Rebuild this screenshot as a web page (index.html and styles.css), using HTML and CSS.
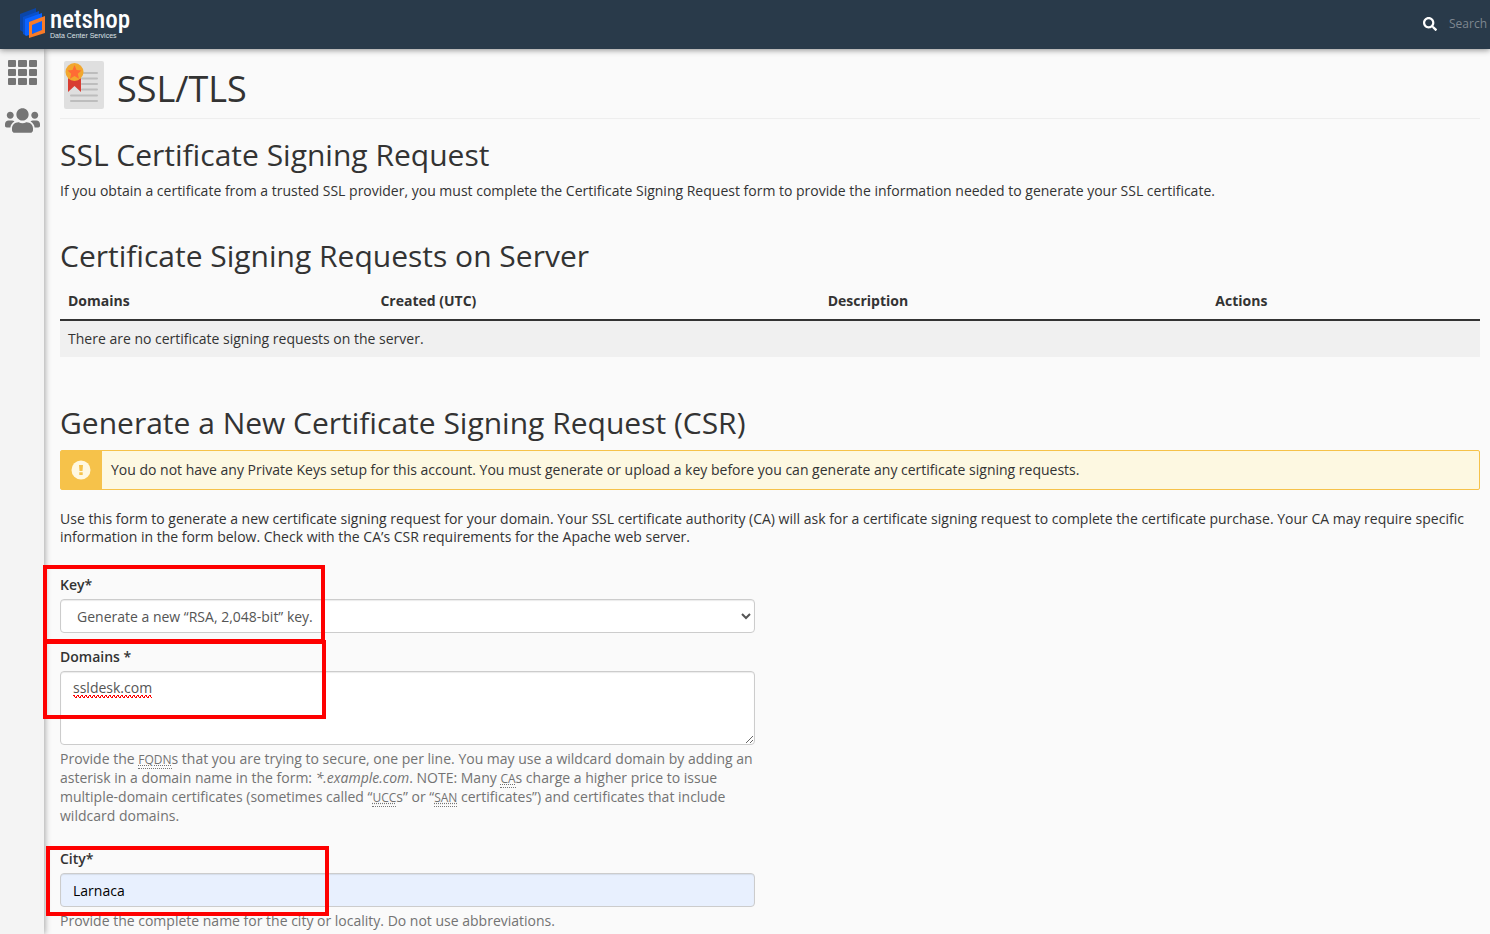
FILE: index.html
```html
<!DOCTYPE html>
<html lang="en">
<head>
<meta charset="utf-8">
<title>SSL/TLS</title>
<link rel="stylesheet" href="styles.css">
</head>
<body>
<header class="topbar">
  <a class="brand" href="#" aria-label="netshop Data Center Services">
    <svg class="brand-mark" viewBox="0 0 28 31" aria-hidden="true">
      <path fill="#0b46a8" d="M1 6 17 0v17L4 24l-3-2z"/>
      <path fill="#0a50cc" d="M4 9 20 3v17L6 27l-2-1z"/>
      <path fill="#0a62ff" d="M6 11 23 5v18L7 28l-1-1z"/>
      <path fill="#f97b28" fill-rule="evenodd" d="M10 14 26 8v17L10 30zM13 17v9l10-4v-9z"/>
    </svg>
    <span class="brand-text">
      <span class="brand-name">netshop</span>
      <span class="brand-tag">Data Center Services</span>
    </span>
  </a>
  <label class="search">
    <svg class="search-icon" viewBox="0 0 512 512" role="img" aria-label="Search"><path fill="#fff" d="M505 442.7 405.300 343c-4.500-4.500-10.600-7-17-7H372c27.600-35.300 44-79.700 44-128C416 93.100 322.900 0 208 0S0 93.100 0 208s93.100 208 208 208c48.300 0 92.700-16.400 128-44v16.300c0 6.400 2.500 12.500 7 17l99.700 99.700c9.400 9.400 24.600 9.400 33.900 0l28.300-28.300c9.400-9.400 9.400-24.600.1-34zM208 336c-70.700 0-128-57.200-128-128 0-70.700 57.200-128 128-128 70.700 0 128 57.200 128 128 0 70.700-57.200 128-128 128z"/></svg>
    <input class="search-input" type="text" placeholder="Search">
  </label>
</header>
<div class="shell">
  <nav class="sidebar" aria-label="Main">
    <a class="side-link" href="#" aria-label="Tools">
      <svg width="29" height="26" viewBox="0 0 29 26" fill="#757575">
        <rect width="8" height="7" rx="1"/><rect x="10" width="9" height="7" rx="1"/><rect x="21" width="8" height="7" rx="1"/>
        <rect y="9" width="8" height="7" rx="1"/><rect x="10" y="9" width="9" height="7" rx="1"/><rect x="21" y="9" width="8" height="7" rx="1"/>
        <rect y="18" width="8" height="7" rx="1"/><rect x="10" y="18" width="9" height="7" rx="1"/><rect x="21" y="18" width="8" height="7" rx="1"/>
      </svg>
    </a>
    <a class="side-link" href="#" aria-label="User Manager">
      <svg width="35" height="25" viewBox="0 32 640 448" fill="#757575"><path d="M96 224c35.300 0 64-28.700 64-64s-28.700-64-64-64-64 28.700-64 64 28.700 64 64 64zm448 0c35.300 0 64-28.700 64-64s-28.700-64-64-64-64 28.700-64 64 28.700 64 64 64zm32 32h-64c-17.600 0-33.500 7.100-45.100 18.600 40.300 22.100 68.900 62 75.100 109.400h66c17.700 0 32-14.300 32-32v-32c0-35.300-28.700-64-64-64zm-256 0c61.900 0 112-50.100 112-112S381.900 32 320 32 208 82.100 208 144s50.100 112 112 112zm76.800 32h-8.300c-20.800 10-43.900 16-68.500 16s-47.600-6-68.500-16h-8.300C179.600 288 128 339.600 128 403.200V432c0 26.500 21.500 48 48 48h288c26.500 0 48-21.500 48-48v-28.800c0-63.600-51.600-115.200-115.200-115.200zm-223.700-13.400C161.500 263.100 145.600 256 128 256H64c-35.300 0-64 28.700-64 64v32c0 17.700 14.300 32 32 32h65.900c6.300-47.400 34.900-87.300 75.200-109.400z"/></svg>
    </a>
  </nav>
  <main class="content">
    <div class="page-head">
      <svg class="page-icon" width="40" height="48" viewBox="0 0 40 48" aria-hidden="true">
        <rect width="40" height="48" rx="2" fill="#dfdfdf"/>
        <path d="M18 12h15M18 17.500h15M18 23h15M18 28.500h15M7 34.500h26M7 40h26" stroke="#bdbdbd" stroke-width="2" stroke-linecap="round"/>
        <path fill="#d83c32" d="M4 16h13v15l-6.500-6L4 31z"/>
        <circle cx="10.500" cy="11" r="9" fill="#f2a72e"/>
        <path fill="#ff6b35" d="m10.500 4 2 5 5 .5-3.700 3.300 1.200 5-4.500-2.700-4.500 2.700 1.200-5-3.700-3.300 5-.5z"/>
      </svg>
      <h1 class="page-title">SSL/TLS</h1>
    </div>

    <section class="intro">
      <h2 class="heading">SSL Certificate Signing Request</h2>
      <p class="text">If you obtain a certificate from a trusted SSL provider, you must complete the Certificate Signing Request form to provide the information needed to generate your SSL certificate.</p>
    </section>

    <section class="requests">
      <h2 class="heading">Certificate Signing Requests on Server</h2>
      <table class="table">
        <thead>
          <tr><th class="col-domains">Domains</th><th class="col-created">Created (UTC)</th><th class="col-desc">Description</th><th>Actions</th></tr>
        </thead>
        <tbody>
          <tr><td colspan="4">There are no certificate signing requests on the server.</td></tr>
        </tbody>
      </table>
    </section>

    <section>
      <h2 class="heading">Generate a New Certificate Signing Request (CSR)</h2>
      <div class="alert" role="alert">
        <div class="alert-badge">
          <svg width="20" height="20" viewBox="0 0 20 20" aria-hidden="true"><circle cx="10" cy="10" r="9.500" fill="#fff8e1"/><path fill="#f6c24a" d="M8 5h4l-.5 6h-3zM8.300 12.300h3.400v2.700H8.300z"/></svg>
        </div>
        <div class="alert-text">You do not have any Private Keys setup for this account. You must generate or upload a key before you can generate any certificate signing requests.</div>
      </div>
      <p class="text">Use this form to generate a new certificate signing request for your domain. Your SSL certificate authority (CA) will ask for a certificate signing request to complete the certificate purchase. Your CA may require specific information in the form below. Check with the CA’s CSR requirements for the Apache web server.</p>

      <form class="form">
        <div class="group">
          <label class="label" for="key">Key*</label>
          <select class="control" id="key"><option>Generate a new “RSA, 2,048-bit” key.</option></select>
          <span class="mark mark-key"></span>
        </div>
        <div class="group">
          <label class="label" for="domains">Domains *</label>
          <textarea class="control control-area" id="domains" spellcheck="false">ssldesk.com</textarea>
          <span class="squiggle"></span>
          <p class="help">Provide the <abbr class="abbr" title="Fully Qualified Domain Name">FQDN</abbr>s that you are trying to secure, one per line. You may use a wildcard domain by adding an asterisk in a domain name in the form: <em>*.example.com</em>. NOTE: Many <abbr class="abbr" title="Certificate Authority">CA</abbr>s charge a higher price to issue multiple-domain certificates (sometimes called “<abbr class="abbr" title="Unified Communications Certificate">UCC</abbr>s” or “<abbr class="abbr" title="Subject Alternative Name">SAN</abbr> certificates”) and certificates that include wildcard domains.</p>
          <span class="mark mark-domains"></span>
        </div>
        <div class="group group-city">
          <label class="label" for="city">City*</label>
          <input class="control control-filled" id="city" type="text" value="Larnaca">
          <p class="help">Provide the complete name for the city or locality. Do not use abbreviations.</p>
          <span class="mark mark-city"></span>
        </div>
      </form>
    </section>
  </main>
</div>
</body>
</html>
```
FILE: styles.css
```css
* { box-sizing: border-box; }
body {
  margin: 0;
  min-height: 100vh;
  display: flex;
  flex-direction: column;
  background: #fafafa;
  color: #333;
  font: 14px/18px "Open Sans", sans-serif;
}
h1, h2, p { margin: 0; }

.topbar {
  display: flex;
  justify-content: space-between;
  align-items: center;
  height: 49px;
  padding: 0 0 2px 19px;
  background: #293a4a;
  box-shadow: 0 1px 6px rgba(0, 0, 0, .45);
  z-index: 2;
}
.brand { display: flex; align-items: center; gap: 3px; color: #fff; text-decoration: none; }
.brand-mark { width: 28px; height: 31px; }
.brand-text { display: flex; flex-direction: column; }
.brand-name { font: 500 25px/25px "Roboto Condensed", "Liberation Sans Narrow", "Liberation Sans", sans-serif; }
.brand-tag { font: 7px/8px "Liberation Sans", sans-serif; color: #dde2e6; }
.search { display: flex; align-items: center; gap: 12px; }
.search-icon { width: 14px; height: 14px; }
.search-input {
  width: 41px;
  padding: 0;
  border: 0;
  background: transparent;
  color: #fff;
  font: 12px/18px "Open Sans", sans-serif;
}
.search-input::placeholder { color: #7e8790; }

.shell { display: flex; flex: 1; }
.sidebar {
  flex: none;
  width: 44px;
  display: flex;
  flex-direction: column;
  align-items: center;
  gap: 22px;
  padding-top: 11px;
  background: #f4f4f4;
  box-shadow: 1px 0 6px rgba(0, 0, 0, .35);
}
.side-link, .side-link svg { display: block; }
.content { flex: 1; min-width: 0; padding: 12px 10px 0 16px; }

.page-head {
  display: flex;
  align-items: center;
  gap: 13px;
  padding: 0 4px 9px;
  margin-bottom: 20px;
  border-bottom: 1px solid #eee;
}
.page-title { font-size: 36px; line-height: 48px; font-weight: 400; padding-top: 4px; height: 48px; }
.heading { font-size: 30px; line-height: 31px; font-weight: 400; margin-bottom: 12px; }
.intro { margin-bottom: 40px; }
.requests { margin-bottom: 50px; }

.table { width: 100%; border-collapse: collapse; table-layout: fixed; line-height: 20px; }
.table th { padding: 8px; text-align: left; font-weight: 700; border-bottom: 2px solid #333; }
.table td { padding: 8px; background: #f0f0f0; }
.col-domains { width: 22%; }
.col-created { width: 31.5%; }
.col-desc { width: 27.3%; }

.alert {
  display: flex;
  margin-bottom: 20px;
  border: 1px solid #f6c24a;
  border-radius: 2px;
  background: #fdf8e1;
}
.alert-badge {
  flex: none;
  width: 41px;
  display: flex;
  align-items: center;
  padding-left: 10px;
  background: #f6c24a;
}
.alert-text { padding: 10px 9px; }

.form { width: calc(50% - 15px); margin-top: 30px; }
.group { position: relative; margin-bottom: 15px; }
.group-city { margin-top: 25px; margin-bottom: 0; }
.label { display: block; margin-bottom: 5px; font-weight: 600; }
.control {
  display: block;
  width: 100%;
  height: 34px;
  padding: 6px 12px;
  border: 1px solid #ccc;
  border-radius: 4px;
  background: #fff;
  box-shadow: inset 0 1px 1px rgba(0, 0, 0, .08);
  color: #555;
  font: 14px/20px "Open Sans", sans-serif;
}
select.control { padding-right: 0; }
.control-area { height: 74px; resize: vertical; }
.control-filled { background: #e8f0fe; color: #000; }
.help { margin-top: 4px; line-height: 19px; color: #737373; }
.abbr {
  font-size: 12px;
  line-height: 12px;
  text-decoration: underline dotted;
  border-bottom: 1px dotted #777;
}

.squiggle {
  position: absolute;
  left: 13px;
  top: 47px;
  width: 79px;
  height: 3px;
  background:
    linear-gradient(90deg, red 50%, transparent 50%) 0 0 / 4px 1px repeat-x,
    linear-gradient(90deg, transparent 50%, red 50%) 0 2px / 4px 1px repeat-x,
    linear-gradient(90deg, red 50%, transparent 50%) 1px 1px / 2px 1px repeat-x;
}
.mark {
  position: absolute;
  border: 4px solid #fe0000;
  pointer-events: none;
}
.mark-key { left: -17px; top: -11px; width: 282px; height: 78px; }
.mark-domains { left: -17px; top: -8px; width: 283px; height: 79px; }
.mark-city { left: -14px; top: -4px; width: 283px; height: 70px; }
```
